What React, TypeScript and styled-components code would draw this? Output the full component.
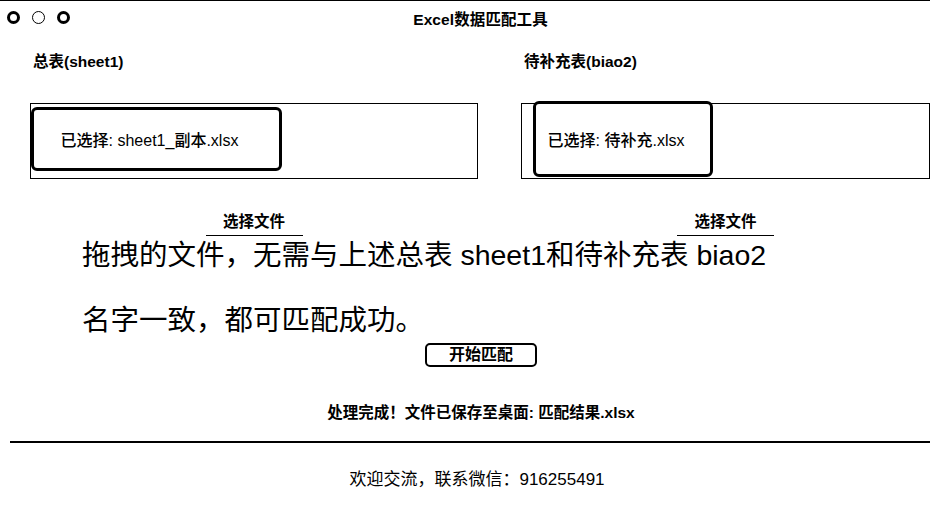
import React from "react";
import styled, { createGlobalStyle } from "styled-components";

const Global = createGlobalStyle`
  html, body { margin: 0; padding: 0; background: #fff; }
  body { font-family: "Liberation Sans", "Noto Sans CJK SC", sans-serif; color: #000; }
  * { box-sizing: border-box; }
`;

const Window = styled.div`
  width: 930px;
  height: 512px;
  display: flex;
  flex-direction: column;
  background: #fff;
  overflow: hidden;
`;

const TitleBar = styled.div`
  height: 34px;
  border-top: 1px solid #000;
  display: grid;
  grid-template-columns: 1fr auto 1fr;
  align-items: center;
  padding-left: 7px;
`;

const Lights = styled.div`
  display: flex;
  gap: 12px;
  align-items: center;
`;

const Light = styled.span<{ $thick?: boolean }>`
  width: 13px;
  height: 13px;
  border-radius: 50%;
  border: ${(p) => (p.$thick ? "3px" : "1px")} solid #000;
`;

const Title = styled.div`
  margin-left: 24px;
  font-size: 15.5px;
  font-weight: 700;
  letter-spacing: 0.1px;
`;

const Columns = styled.div`
  display: grid;
  grid-template-columns: 448px 409px;
  column-gap: 43px;
  padding-left: 30px;
  margin-top: 19px;
`;

const Column = styled.div`
  display: flex;
  flex-direction: column;
  align-items: stretch;
`;

const Label = styled.div`
  font-size: 15.5px;
  font-weight: 700;
  line-height: 18px;
  padding-left: 3px;
`;

const DropFrame = styled.div`
  margin-top: 32px;
  height: 76px;
  border: 1px solid #000;
  display: flex;
  align-items: flex-start;
`;

const Chosen = styled.div<{ $left: number; $top: number; $w: number; $h: number }>`
  margin-left: ${(p) => p.$left}px;
  margin-top: ${(p) => p.$top}px;
  width: ${(p) => p.$w}px;
  height: ${(p) => p.$h}px;
  border: 3px solid #000;
  border-radius: 6px;
  background: #fff;
  display: flex;
  align-items: center;
  justify-content: center;
  padding-right: 14px;
  font-size: 16px;
  font-weight: 500;
  white-space: nowrap;
`;

const SelectButton = styled.button`
  align-self: center;
  margin-top: 34px;
  width: 97px;
  padding: 0 0 4px;
  border: none;
  border-bottom: 1px solid #000;
  background: transparent;
  font-family: inherit;
  font-size: 15.5px;
  font-weight: 700;
  line-height: 18px;
  color: #000;
`;

const Hint = styled.div`
  margin-top: -13.5px;
  margin-left: 82px;
  width: 700px;
  font-size: 28.5px;
  line-height: 65px;
`;

const Lower = styled.div`
  display: flex;
  flex-direction: column;
  align-items: center;
  padding-left: 32px;
`;

const StartButton = styled.button`
  margin-top: -9.5px;
  width: 112px;
  height: 24px;
  border: 2px solid #000;
  border-radius: 5px;
  background: #fff;
  font-family: inherit;
  font-size: 16px;
  line-height: 18px;
  font-weight: 700;
  color: #000;
  padding: 0;
  display: flex;
  align-items: center;
  justify-content: center;
`;

const Status = styled.div`
  margin-top: 37px;
  font-size: 15.5px;
  font-weight: 700;
  line-height: 18px;
`;

const Divider = styled.hr`
  margin: 19px 0 0 10px;
  width: 920px;
  border: none;
  border-top: 2px solid #000;
`;

const Footer = styled.div`
  margin-top: 27px;
  text-align: center;
  padding-left: 24px;
  font-size: 17px;
  line-height: 20px;
`;

export default function App() {
  return (
    <Window>
      <Global />
      <TitleBar>
        <Lights>
          <Light $thick />
          <Light />
          <Light $thick />
        </Lights>
        <Title>Excel数据匹配工具</Title>
        <span />
      </TitleBar>
      <Columns>
        <Column>
          <Label>总表(sheet1)</Label>
          <DropFrame>
            <Chosen $left={0} $top={3} $w={251} $h={64}>
              已选择: sheet1_副本.xlsx
            </Chosen>
          </DropFrame>
          <SelectButton>选择文件</SelectButton>
        </Column>
        <Column>
          <Label>待补充表(biao2)</Label>
          <DropFrame>
            <Chosen $left={11} $top={-3} $w={180} $h={76}>
              已选择: 待补充.xlsx
            </Chosen>
          </DropFrame>
          <SelectButton>选择文件</SelectButton>
        </Column>
      </Columns>
      <Hint>拖拽的文件，无需与上述总表 sheet1和待补充表 biao2 名字一致，都可匹配成功。</Hint>
      <Lower>
        <StartButton>开始匹配</StartButton>
        <Status>处理完成！文件已保存至桌面: 匹配结果.xlsx</Status>
      </Lower>
      <Divider />
      <Footer>欢迎交流，联系微信：916255491</Footer>
    </Window>
  );
}
